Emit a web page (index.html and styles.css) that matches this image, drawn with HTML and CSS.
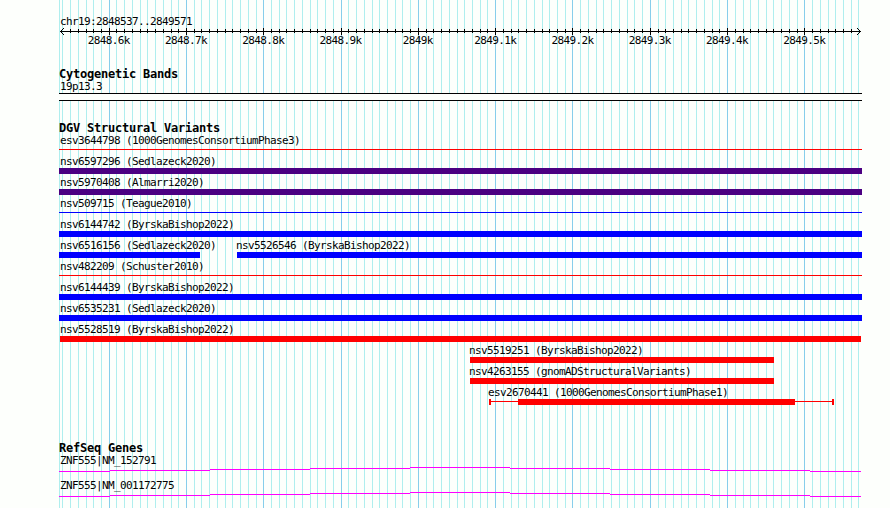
FILE: index.html
```
<!DOCTYPE html>
<html>
<head>
    <meta charset="utf-8">
    <title>chr19:2848537..2849571</title>
    <link rel="stylesheet" href="styles.css">
</head>
<body>
    <div class="browser">
        <svg class="grid" width="890" height="508">
            <path class="grid-minor" id="gridMinor"/>
            <path class="grid-major" id="gridMajor"/>
        </svg>

        <div class="ruler">
            <div class="label">chr19:2848537..2849571</div>
            <svg class="axis" width="803" height="7">
                <path d="M1 3.5H802"/>
                <path id="ticks"/>
                <path d="M4.5 0v1M3.5 1v1M2.5 2v1M1.5 3v1M2.5 4v1M3.5 5v1M4.5 6v1"/>
                <path d="M798.5 0v1M799.5 1v1M800.5 2v1M801.5 3v1M800.5 4v1M799.5 5v1M798.5 6v1"/>
            </svg>
            <div class="ruler-labels">
                <span>2848.6k</span>
                <span>2848.7k</span>
                <span>2848.8k</span>
                <span>2848.9k</span>
                <span>2849k</span>
                <span>2849.1k</span>
                <span>2849.2k</span>
                <span>2849.3k</span>
                <span>2849.4k</span>
                <span>2849.5k</span>
            </div>
        </div>

        <div class="track cytoband">
            <h2>Cytogenetic Bands</h2>
            <div class="label">19p13.3</div>
            <div class="band"></div>
        </div>

        <div class="track variants">
            <h2>DGV Structural Variants</h2>
            <div class="row">
                <div class="feature" style="width: 803px"><div class="label">esv3644798 (1000GenomesConsortiumPhase3)</div><div class="bar thin red"></div></div>
            </div>
            <div class="row">
                <div class="feature" style="width: 803px"><div class="label">nsv6597296 (Sedlazeck2020)</div><div class="bar indigo"></div></div>
            </div>
            <div class="row">
                <div class="feature" style="width: 803px"><div class="label">nsv5970408 (Almarri2020)</div><div class="bar indigo"></div></div>
            </div>
            <div class="row">
                <div class="feature" style="width: 803px"><div class="label">nsv509715 (Teague2010)</div><div class="bar thin blue"></div></div>
            </div>
            <div class="row">
                <div class="feature" style="width: 803px"><div class="label">nsv6144742 (ByrskaBishop2022)</div><div class="bar blue"></div></div>
            </div>
            <div class="row">
                <div class="feature" style="width: 141px"><div class="label">nsv6516156 (Sedlazeck2020)</div><div class="bar blue"></div></div>
                <div class="feature inner" style="margin-left: 37px; width: 625px"><div class="label">nsv5526546 (ByrskaBishop2022)</div><div class="bar blue"></div></div>
            </div>
            <div class="row">
                <div class="feature" style="width: 803px"><div class="label">nsv482209 (Schuster2010)</div><div class="bar thin red"></div></div>
            </div>
            <div class="row">
                <div class="feature" style="width: 803px"><div class="label">nsv6144439 (ByrskaBishop2022)</div><div class="bar blue"></div></div>
            </div>
            <div class="row">
                <div class="feature" style="width: 803px"><div class="label">nsv6535231 (Sedlazeck2020)</div><div class="bar blue"></div></div>
            </div>
            <div class="row">
                <div class="feature full" style="margin-left: 1px; width: 801px"><div class="label">nsv5528519 (ByrskaBishop2022)</div><div class="bar red"></div></div>
            </div>
            <div class="row">
                <div class="feature inner" style="margin-left: 411px; width: 304px"><div class="label">nsv5519251 (ByrskaBishop2022)</div><div class="bar red"></div></div>
            </div>
            <div class="row">
                <div class="feature inner" style="margin-left: 411px; width: 304px"><div class="label">nsv4263155 (gnomADStructuralVariants)</div><div class="bar red"></div></div>
            </div>
            <div class="row">
                <div class="feature inner" style="margin-left: 430px; width: 345px">
                    <div class="label">esv2670441 (1000GenomesConsortiumPhase1)</div>
                    <svg class="range" width="345" height="6">
                        <path d="M0 0h2v6H0zM343 0h2v6h-2zM2 2h341v1H2zM29 0h277v6H29z"/>
                    </svg>
                </div>
            </div>
        </div>

        <div class="track genes">
            <h2>RefSeq Genes</h2>
            <div class="gene">
                <div class="label">ZNF555|NM_152791</div>
                <svg class="intron" width="803" height="5">
                    <path d="M0 4.5H51M51 3.5H151M151 2.5H251M251 1.5H351M351 .5H451M451 1.5H551M551 2.5H651M651 3.5H751M751 4.5H802"/>
                </svg>
            </div>
            <div class="gene">
                <div class="label">ZNF555|NM_001172775</div>
                <svg class="intron" width="803" height="5">
                    <path d="M0 4.5H51M51 3.5H151M151 2.5H251M251 1.5H351M351 .5H451M451 1.5H551M551 2.5H651M651 3.5H751M751 4.5H802"/>
                </svg>
            </div>
        </div>
    </div>
    <script src="grid.js"></script>
</body>
</html>
```

FILE: styles.css
```
body {
    margin: 0;
    background: #fdfffc;
    color: #000;
    font-family: "DejaVu Sans Mono", "Liberation Mono", monospace;
}
.browser {
    position: relative;
    box-sizing: border-box;
    width: 890px;
    height: 508px;
    padding: 16px 28px 0 59px;
    overflow: hidden;
}
svg {
    display: block;
    fill: none;
    shape-rendering: crispEdges;
}
.grid {
    position: absolute;
    top: 0;
    left: 0;
    z-index: -1;
}
.grid-minor {
    stroke: #afeeee;
}
.grid-major {
    stroke: #87ceeb;
}
.label {
    height: 12px;
    margin-left: 1px;
    font-size: 11px;
    line-height: 12px;
    letter-spacing: -0.622px;
    white-space: nowrap;
}
h2 {
    height: 13px;
    margin: 0;
    font-size: 12px;
    font-weight: bold;
    line-height: 13px;
    letter-spacing: -0.224px;
}
.ruler {
    height: 52px;
}
.axis {
    stroke: #000;
}
.ruler-labels {
    display: grid;
    grid-template-columns: repeat(10, 77.3px);
    margin-left: 11px;
    font-size: 11px;
    line-height: 12px;
    letter-spacing: -0.622px;
    text-align: center;
}
.cytoband {
    height: 54px;
}
.band {
    height: 6px;
    border: solid #000;
    border-width: 1px 0;
    background: #fdfffc;
}
.variants {
    height: 320px;
}
.row {
    display: flex;
    height: 21px;
}
.inner .label {
    margin-left: -1px;
}
.full .label {
    margin-left: 0;
}
.bar {
    height: 6px;
}
.thin {
    height: 1px;
    margin-top: 2px;
}
.red {
    background: #f00;
}
.blue {
    background: #00f;
}
.indigo {
    background: #4b0082;
}
.range {
    fill: #f00;
}
.gene {
    height: 25px;
}
.intron {
    stroke: #f0f;
}
```

FILE: grid.js
```
// one line every 10 bp, a major one every 100 bp
var step = 7.7295;
var origin = 109.21;
var minor = 'M59.5 0V508';
var major = '';
var ticks = '';

for (var i = -6; i <= 97; i++) {
    var x = Math.floor(origin + i * step) + 0.5;
    var isMajor = i % 10 === 0;
    if (isMajor) {
        major += 'M' + x + ' 0V508';
    } else {
        minor += 'M' + x + ' 0V508';
    }
    if (i > -6 && i < 97) {
        ticks += 'M' + (x - 59) + (isMajor ? ' 0V7' : ' 1V5');
    }
}

document.getElementById('gridMinor').setAttribute('d', minor);
document.getElementById('gridMajor').setAttribute('d', major);
document.getElementById('ticks').setAttribute('d', ticks);
```
